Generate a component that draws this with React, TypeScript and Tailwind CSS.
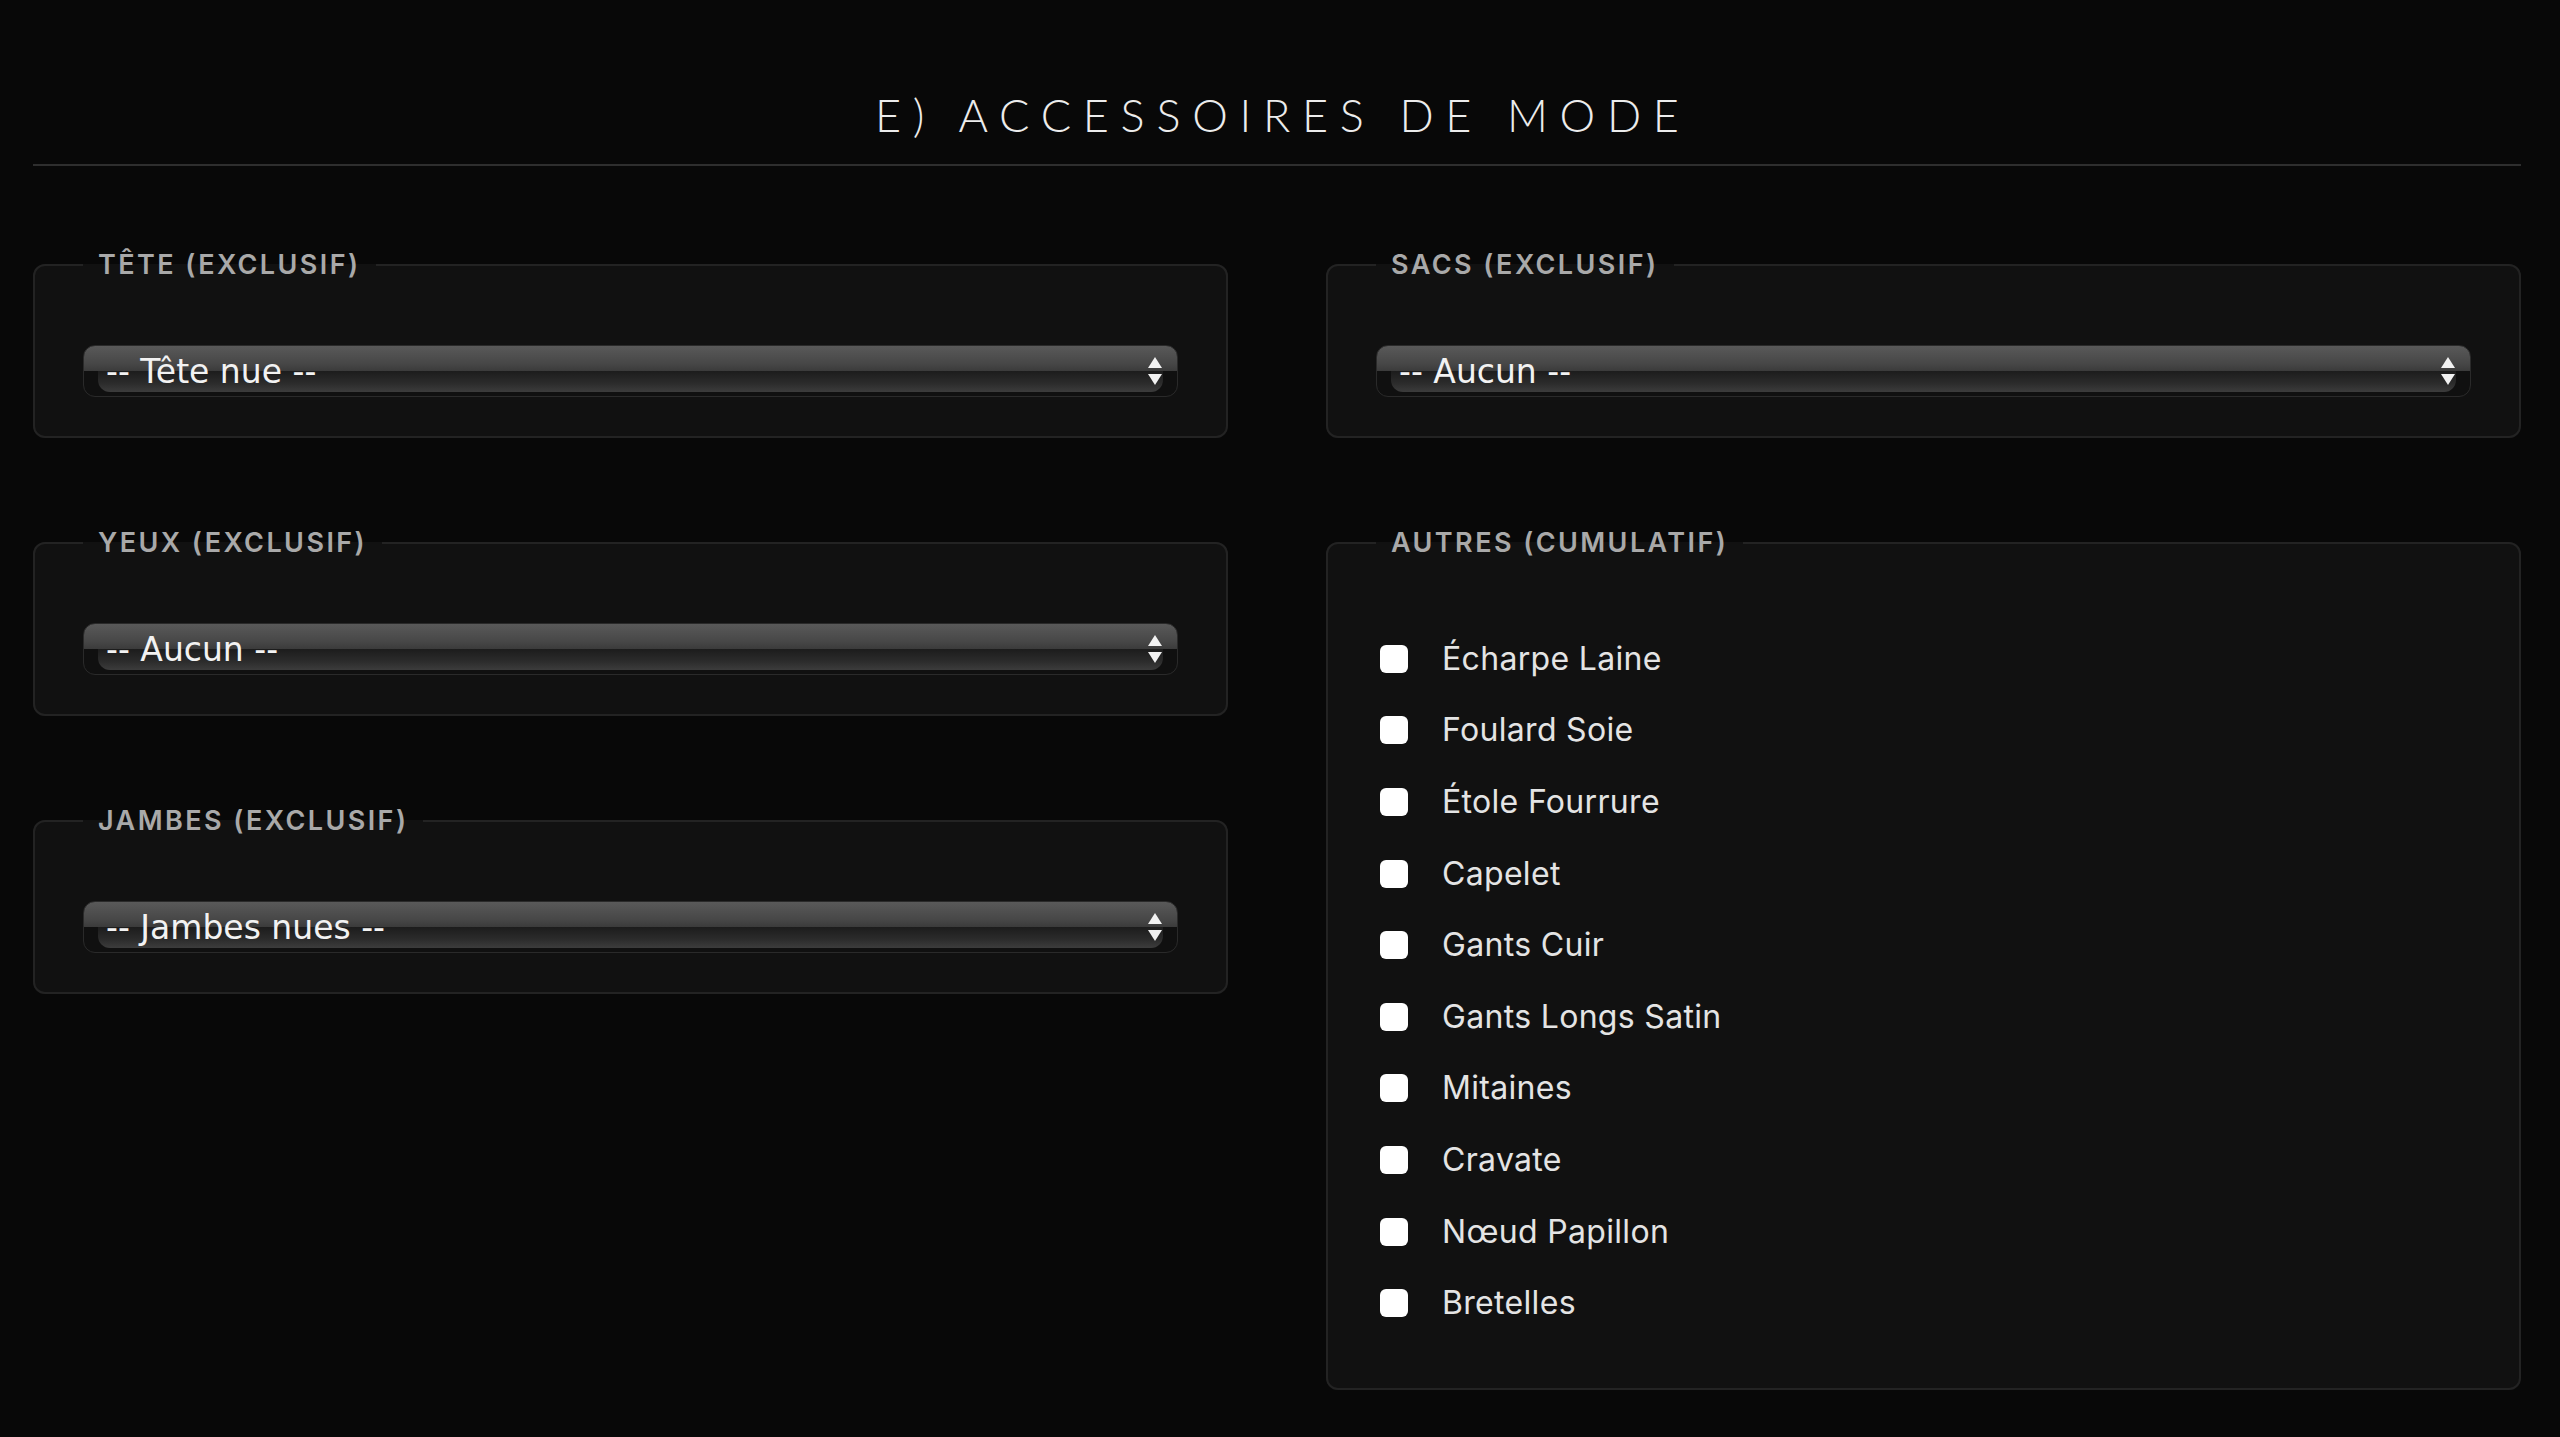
import React from "react";

const others = [
  "Écharpe Laine",
  "Foulard Soie",
  "Étole Fourrure",
  "Capelet",
  "Gants Cuir",
  "Gants Longs Satin",
  "Mitaines",
  "Cravate",
  "Nœud Papillon",
  "Bretelles",
];

function Group({ label, children, bottom = "pb-[39px]" }: { label: string; children: React.ReactNode; bottom?: string }) {
  return (
    <fieldset className={`rounded-[12px] border-2 border-[#232323] bg-[#111111] px-[48px] pt-[63px] ${bottom}`}>
      <legend className="px-[15px] font-['Inter','Liberation_Sans',sans-serif] text-[27px] leading-[34px] font-semibold tracking-[0.09em] text-[#a9a9a9]">
        {label}
      </legend>
      {children}
    </fieldset>
  );
}

function Select({ value }: { value: string }) {
  return (
    <div className="relative h-[52px] overflow-hidden rounded-[12px] border border-[#2a2a2a] bg-[linear-gradient(to_bottom,#595959_0%,#474747_35%,#3b3b3b_50%,#101010_50%,#101010_100%)]">
      {/* glossy lower bevel */}
      <div className="absolute top-1/2 bottom-[4px] left-[14px] right-[14px] rounded-b-[12px] bg-[linear-gradient(to_bottom,#1c1c1c,#2c2c2c_60%,#3c3c3c)]" />
      <div className="relative flex h-full items-center justify-between pl-[22px] pr-[15px]">
        <span className="font-['DejaVu_Sans',sans-serif] text-[33px] leading-none text-[#f2f2f2]">{value}</span>
        <svg width="14" height="28" viewBox="0 0 14 28" className="shrink-0">
          <polygon points="7,0 14,11 0,11" fill="#f2f2f2" />
          <polygon points="0,17 14,17 7,28" fill="#f2f2f2" />
        </svg>
      </div>
    </div>
  );
}

export default function App() {
  return (
    <div className="min-h-[1437px] w-full bg-[#080808] pl-[33px] pr-[39px] pt-[88px] pb-[40px]">
      <h1 className="pl-[0.26em] text-center font-['Lato','Liberation_Sans',sans-serif] text-[45px] leading-[54px] font-light tracking-[0.26em] text-[#ececec]">
        E) ACCESSOIRES DE MODE
      </h1>
      <div className="mt-[22px] border-t-2 border-[#2e2e2e]" />

      <div className="mt-[82px] grid grid-cols-2 gap-x-[98px]">
        {/* LEFT COLUMN */}
        <div className="flex flex-col gap-[88px]">
          <Group label="TÊTE (EXCLUSIF)">
            <Select value="-- Tête nue --" />
          </Group>
          <Group label="YEUX (EXCLUSIF)">
            <Select value="-- Aucun --" />
          </Group>
          <Group label="JAMBES (EXCLUSIF)">
            <Select value="-- Jambes nues --" />
          </Group>
        </div>

        {/* RIGHT COLUMN */}
        <div className="flex flex-col gap-[88px]">
          <Group label="SACS (EXCLUSIF)">
            <Select value="-- Aucun --" />
          </Group>
          <Group label="AUTRES (CUMULATIF)" bottom="pb-[49px]">
            <div className="flex flex-col">
              {others.map((o) => (
                <label key={o} className="flex h-[71.6px] items-center gap-[34px] pl-[4px]">
                  <span className="h-[28px] w-[28px] shrink-0 rounded-[6px] bg-white" />
                  <span className="font-['Inter','Liberation_Sans',sans-serif] text-[32px] leading-none tracking-[0.01em] text-[#e4e4e4]">
                    {o}
                  </span>
                </label>
              ))}
            </div>
          </Group>
        </div>
      </div>
    </div>
  );
}
